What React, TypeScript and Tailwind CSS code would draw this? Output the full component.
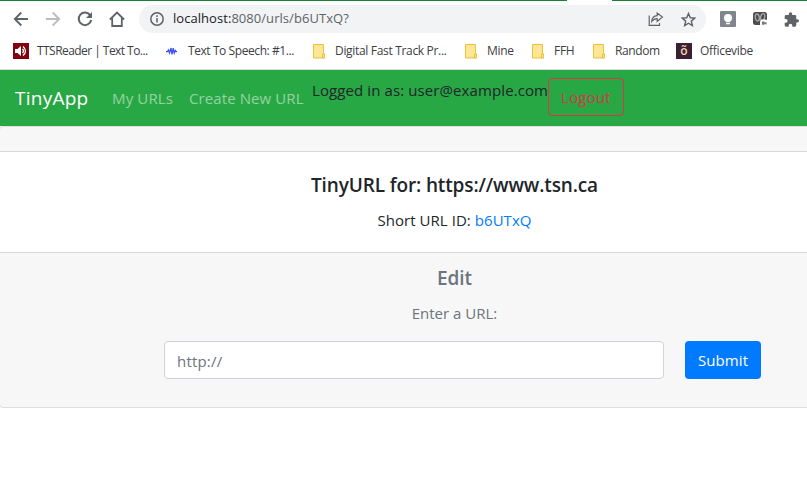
import React from 'react';

function BackIcon({ className }: { className: string }) {
  return (
    <svg className={className} width="16" height="16" viewBox="0 0 16 16" fill="none" stroke="currentColor" strokeWidth="1.8">
      <path d="M15 8H2.5M8.3 1.5 1.8 8l6.5 6.5" />
    </svg>
  );
}

function Folder() {
  return (
    <svg width="13" height="15" viewBox="0 0 13 15" className="shrink-0">
      <path d="M.5.5h10v9.500h1v4H.5z" fill="#ffe694" stroke="#e8c33f" />
      <path d="M9.500 14v-4h2v4z" fill="#ffe694" stroke="#e8c33f" />
    </svg>
  );
}

function Bookmark({ icon, label, className, text }: { icon: React.ReactNode; label: string; className: string; text: string }) {
  return (
    <div className={`flex shrink-0 items-center whitespace-nowrap ${className}`}>
      {icon}
      <span className={text}>{label}</span>
    </div>
  );
}

export default function App() {
  return (
    <div className="h-[484px] w-[807px] overflow-hidden bg-white font-['Open_Sans','Noto_Sans',sans-serif] text-[#212529]">
      <header className="h-[70px] border-b border-[#dadce0]">
        <div className="flex h-px">
          <div className="w-[567px] bg-[#188038]" />
          <div className="w-[45px]" />
          <div className="flex-1 bg-[#188038]" />
        </div>
        <div className="flex h-[36px] items-center text-[#5f6368]">
          <BackIcon className="ml-[13px]" />
          <BackIcon className="ml-4 rotate-180 text-[#babcbe]" />
          <svg className="ml-4" width="16" height="16" viewBox="0 0 16 16" fill="none" stroke="currentColor" strokeWidth="2">
            <path d="M13.300 4.400A6.300 6.300 0 1 0 14.200 9" />
            <path d="M15 1v6H9z" fill="currentColor" stroke="none" />
          </svg>
          <svg className="ml-4" width="16" height="16" viewBox="0 0 16 16" fill="none" stroke="currentColor" strokeWidth="1.8">
            <path d="M.9 8.500 8 1.600l7.100 6.900M3.200 7v8h9.600V7" />
          </svg>
          <div className="ml-[14px] flex h-7 w-[567px] shrink-0 items-center rounded-full bg-[#f1f3f4] pl-[11px]">
            <svg width="14" height="14" viewBox="0 0 14 14" fill="none" stroke="currentColor" strokeWidth="1.500">
              <circle cx="7" cy="7" r="6.200" />
              <path d="M7 6v4.600M7 3.300v1.600" />
            </svg>
            <span className="ml-[9px] whitespace-nowrap text-[13px] tracking-[0.05px]">
              <span className="text-[#202124]">localhost:</span>8080/urls/b6UTxQ?
            </span>
            <svg className="ml-auto" width="16" height="14" viewBox="0 0 16 14" fill="none" stroke="currentColor" strokeWidth="1.200">
              <path d="M1.200 3.500v9.800h10.300V11M9.200 1v2.700C6 3.800 4 5.800 3.700 9.500c1.500-2 3-2.900 5.500-2.900v2.800L14.400 5z" />
            </svg>
            <svg className="ml-[17px] mr-[10px]" width="15" height="15" viewBox="0 0 16 16" fill="none" stroke="currentColor" strokeWidth="1.500">
              <path d="m8 1.600 1.900 4.500 4.800.4L11 9.700l1.100 4.800L8 12l-4.100 2.500L5 9.700 1.300 6.500l4.800-.4z" />
            </svg>
          </div>
          <svg className="ml-[14px] shrink-0" width="16" height="16" viewBox="0 0 16 16">
            <rect width="16" height="16" rx="1" fill="#80868b" />
            <circle cx="8" cy="7" r="4" fill="#fff" />
            <path d="M6 9h4v2H6zM6 11.800h4v1.400H6z" fill="#fff" />
          </svg>
          <svg className="ml-[17px] shrink-0" width="15" height="16" viewBox="0 0 15 16">
            <rect y="1" width="14" height="13" rx="2.500" fill="#4d4d4d" />
            <ellipse cx="4.300" cy="6.500" rx="2" ry="3.500" fill="none" stroke="#aaa" strokeWidth="1.300" transform="rotate(-12 4.300 6.500)" />
            <ellipse cx="9.700" cy="6" rx="2" ry="3.500" fill="none" stroke="#aaa" strokeWidth="1.300" transform="rotate(12 9.700 6)" />
            <rect x="7" y="8.500" width="8" height="7" rx="2.500" fill="#fff" />
            <path d="M9 10.500h2.500v1.200l2-1v3l-2-1v1H9z" fill="#777" />
          </svg>
          <svg className="ml-4 shrink-0" width="15" height="15" viewBox="1 1 22 21" fill="currentColor">
            <path d="M20.500 11H19V7a2 2 0 0 0-2-2h-4V3.500a2.500 2.500 0 0 0-5 0V5H4a2 2 0 0 0-2 2v3.800h1.500a2.700 2.700 0 0 1 0 5.400H2V20a2 2 0 0 0 2 2h3.800v-1.500a2.700 2.700 0 0 1 5.400 0V22H17a2 2 0 0 0 2-2v-4h1.500a2.500 2.500 0 0 0 0-5z" />
          </svg>
        </div>
        <div className="flex h-[28px] items-center text-[12px] text-[#3c4043]">
          <Bookmark className="w-[153px] pl-[13px]" text="ml-2 tracking-[-0.55px]" label="TTSReader | Text To..." icon={
            <svg width="16" height="16" viewBox="0 0 16 16">
              <path d="M0 0h16v16H0z" fill="#82000f" />
              <path d="M2 6h2.500L8 3v10L4.500 10H2z" fill="#fff" />
              <path d="M9.500 6q2 2 0 4M10 3.500q5 4.500 0 9" fill="none" stroke="#fff" strokeWidth="1.300" />
            </svg>
          } />
          <Bookmark className="w-[160px] pl-[13px]" text="ml-[11px] tracking-[-0.42px]" label="Text To Speech: #1..." icon={
            <svg width="11" height="10" viewBox="0 0 11 10" fill="none" stroke="#3b4cf5" strokeWidth="1.25">
              <path d="M0 5.500h1.500l1-1.500 1 3L5 2l1 6.500L7.200 2l1 5 1-2.500.8 1h1" />
            </svg>
          } />
          <Bookmark className="w-[152px]" text="ml-[9px] tracking-[-0.32px]" label="Digital Fast Track Pr..." icon={<Folder />} />
          <Bookmark className="w-[67px]" text="ml-[9px] tracking-[-0.3px]" label="Mine" icon={<Folder />} />
          <Bookmark className="w-[61px]" text="ml-[9px] tracking-[-0.3px]" label="FFH" icon={<Folder />} />
          <Bookmark className="w-[83px]" text="ml-[9px] tracking-[-0.4px]" label="Random" icon={<Folder />} />
          <Bookmark className="" text="ml-2 tracking-[-0.3px]" label="Officevibe" icon={
            <span className="flex h-4 w-4 items-center justify-center bg-[#3b2033] text-[12px] font-semibold leading-4 text-[#f5d6b5]">õ</span>
          } />
        </div>
      </header>

      <nav className="flex h-14 items-start whitespace-nowrap bg-[#28a745] pt-2 text-[15px] leading-6">
        <a className="ml-[15px] mt-2 w-[97px] text-[19px] tracking-[0.25px] text-white">TinyApp</a>
        <a className="mt-2 w-[77px] tracking-[0.15px] text-white/50">My URLs</a>
        <a className="mt-2 w-[123px] tracking-[0.1px] text-white/50">Create New URL</a>
        <span className="w-[236px] tracking-[0.1px]">Logged in as: user@example.com</span>
        <button className="h-[38px] w-[76px] rounded border border-[#dc3545] tracking-[0.2px] text-[#dc3545]">Logout</button>
      </nav>

      <main className="-ml-px h-[282px] w-[911px] whitespace-nowrap rounded border border-[#dfdfdf] bg-[#f7f7f7] text-center text-[15px] leading-6">
        <div className="h-[24px]" />
        <section className="h-[102px] border-y border-[#d9d9d9] bg-white pt-[21px]">
          <h5 className="text-[19px] font-semibold leading-6 tracking-[-0.13px]">TinyURL for: https://www.tsn.ca</h5>
          <p className="mt-[11px] tracking-[0.05px]">Short URL ID: <a className="text-[#007bff]">b6UTxQ</a></p>
        </section>
        <section className="pt-[13px] text-[#6c757d]">
          <h5 className="text-[19px] font-semibold leading-6 tracking-[-0.05px]">Edit</h5>
          <p className="mt-[11px]">Enter a URL:</p>
          <form className="mt-4 flex pl-[164px]">
            <input placeholder="http://" className="h-[38px] w-[500px] rounded border border-[#ced4da] bg-white px-3 pt-0.5 tracking-[0.2px] placeholder:text-[#6c757d]" />
            <button type="button" className="ml-[21px] h-[38px] w-[76px] rounded bg-[#007bff] tracking-[0.1px] text-white">Submit</button>
          </form>
        </section>
      </main>
    </div>
  );
}
